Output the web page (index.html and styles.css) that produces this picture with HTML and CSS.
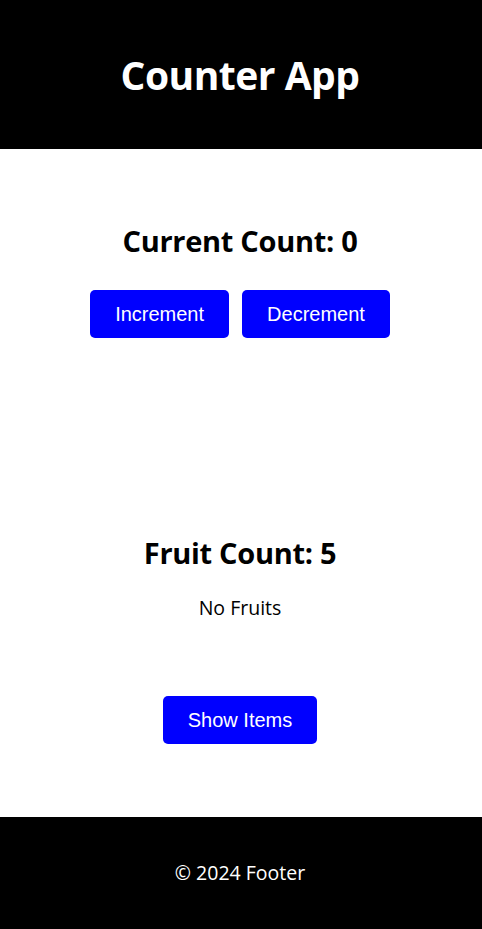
FILE: index.html
```html
<!DOCTYPE html>
<html>
<head>
<meta charset="utf-8">
<link rel="stylesheet" href="styles.css">
</head>
<body>
<header class="header"><h1 class="title">Counter App</h1></header>
<main class="main">
  <section class="counter">
    <h2 class="heading">Current Count: 0</h2>
    <div class="btn-row">
      <button class="btn">Increment</button>
      <button class="btn">Decrement</button>
    </div>
  </section>
  <section class="fruits">
    <h2 class="heading">Fruit Count: 5</h2>
    <p class="empty">No Fruits</p>
    <button class="btn">Show Items</button>
  </section>
</main>
<footer class="footer"><p class="footer-text">© 2024 Footer</p></footer>
</body>
</html>
```
FILE: styles.css
```css
* { box-sizing: border-box; }
body {
  margin: 0;
  font-family: "Open Sans", "Noto Sans", sans-serif;
  color: #000;
  background: #fff;
}
.header {
  height: 149px;
  background: #000;
  display: flex;
  align-items: center;
  justify-content: center;
  padding-right: 2px;
}
.title {
  margin: 0;
  color: #fff;
  font-size: 39px;
  line-height: 48px;
  font-weight: 700;
  letter-spacing: -0.5px;
}
.main {
  display: flex;
  flex-direction: column;
  align-items: center;
  padding-right: 2px;
}
.counter {
  display: flex;
  flex-direction: column;
  align-items: center;
  padding-top: 74px;
}
.heading {
  margin: 0;
  font-size: 29px;
  line-height: 36px;
  font-weight: 700;
  letter-spacing: -0.3px;
}
.btn-row {
  display: flex;
  gap: 13px;
  margin-top: 31px;
}
.btn {
  font-family: "Liberation Sans", Arial, sans-serif;
  font-size: 20px;
  line-height: 24px;
  color: #fff;
  background: #0000ff;
  border: none;
  border-radius: 5px;
  padding: 12px 25px;
}
.fruits {
  display: flex;
  flex-direction: column;
  align-items: center;
  padding-top: 197px;
  padding-bottom: 73px;
}
.empty {
  margin: 25px 0 76px;
  font-size: 19.5px;
  line-height: 24px;
}
.footer {
  height: 112px;
  background: #000;
  display: flex;
  align-items: center;
  justify-content: center;
  padding-right: 2px;
}
.footer-text {
  margin: 0;
  color: #fff;
  font-size: 19.5px;
  line-height: 24px;
}
```
